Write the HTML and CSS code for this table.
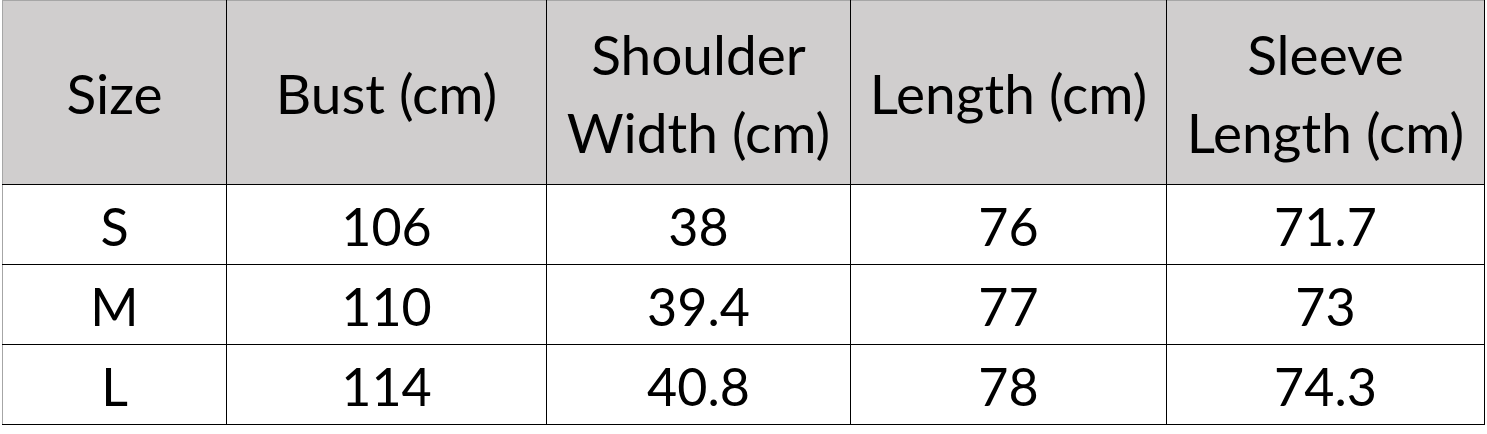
FILE: index.html
```html
<!DOCTYPE html>
<html lang="en">
<head>
    <meta charset="UTF-8">
    <meta name="viewport" content="width=device-width, initial-scale=1.0">
    <title>Size Chart</title>
    <link rel="stylesheet" href="styles.css">
</head>
<body>

    <!-- Size chart -->
    <table class="size-chart">
        <colgroup>
            <col class="col-size">
            <col class="col-bust">
            <col class="col-shoulder">
            <col class="col-length">
            <col class="col-sleeve">
        </colgroup>
        <thead>
            <tr>
                <th>Size</th>
                <th>Bust (cm)</th>
                <th>Shoulder<br>Width (cm)</th>
                <th>Length (cm)</th>
                <th>Sleeve<br>Length (cm)</th>
            </tr>
        </thead>
        <tbody>
            <tr>
                <td>S</td>
                <td>106</td>
                <td>38</td>
                <td>76</td>
                <td>71.7</td>
            </tr>
            <tr>
                <td>M</td>
                <td>110</td>
                <td>39.4</td>
                <td>77</td>
                <td>73</td>
            </tr>
            <tr>
                <td>L</td>
                <td>114</td>
                <td>40.8</td>
                <td>78</td>
                <td>74.3</td>
            </tr>
        </tbody>
    </table>

</body>
</html>
```

FILE: styles.css
```css
/* General Styling */
body {
    margin: 0;
    padding: 0;
    background-color: #ffffff;
    color: #000000;
    font-family: Lato, "Open Sans", sans-serif;
}

.size-chart {
    margin-left: 2px;
    border-collapse: collapse;
    table-layout: fixed;
    width: 1482px;
}

.col-size { width: 224px; }
.col-bust { width: 320px; }
.col-shoulder { width: 304px; }
.col-length { width: 316px; }
.col-sleeve { width: 318px; }

.size-chart th,
.size-chart td {
    border: 1px solid #000;
    padding: 0;
    text-align: center;
    vertical-align: middle;
    font-weight: normal;
}

.size-chart th {
    height: 183px;
    font-size: 55px;
    line-height: 78px;
    background-color: #d0cece;
    border-top-color: #a6a6a6;
}

.size-chart td {
    box-sizing: border-box;
    height: 80px;
    font-size: 52px;
    line-height: 60px;
    padding-top: 3px;
}

/* grid edge on the left is the sheet's gridline */
.size-chart th:first-child,
.size-chart td:first-child {
    border-left-color: #a6a6a6;
}
```
